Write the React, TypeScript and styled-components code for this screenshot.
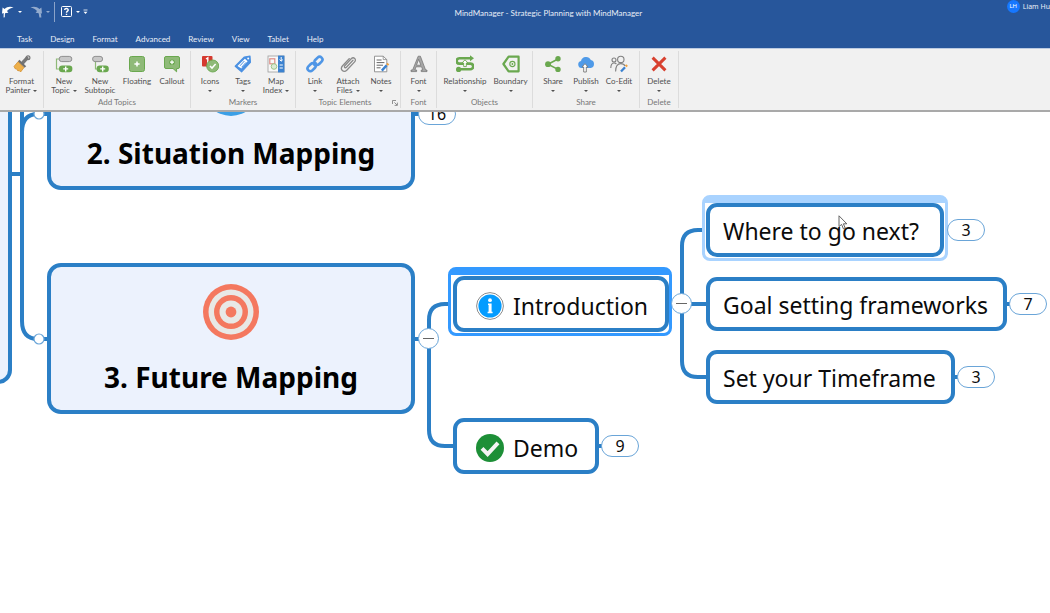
import React from "react";
import styled, { createGlobalStyle } from "styled-components";

const line = "#2b7fc6";
const green = "#6aa84f";
const softGreen = "#8fba78";

const GlobalStyle = createGlobalStyle`
  * { box-sizing: border-box; }
  body { margin: 0; background: #fff; }
  button { font: inherit; color: inherit; background: none; border: 0; padding: 0; margin: 0; cursor: default; }
`;

const Page = styled.div`
  min-height: 100vh;
  display: flex;
  flex-direction: column;
  overflow: hidden;
  font-family: Lato, "Liberation Sans", sans-serif;
  font-size: 8px;
  line-height: 9px;
`;

/* ---------- Title bar ---------- */

const Header = styled.header`
  background: #27569b;
  color: #e9eef7;
`;

const TitleBar = styled.div`
  display: flex;
  align-items: flex-start;
  height: 28px;
`;

const QuickAccess = styled.div`
  flex: none;
  display: flex;
  align-items: center;
  width: 90px;
  height: 23px;
  padding-left: 2px;
`;

const QuickButton = styled.button<{ $width: number; $dim?: boolean }>`
  display: flex;
  align-items: center;
  gap: 4px;
  width: ${(p) => p.$width}px;
  color: #fff;
  opacity: ${(p) => (p.$dim ? 0.5 : 1)};
`;

const QuickDivider = styled.span`
  width: 1px;
  height: 20px;
  margin-right: 6px;
  background: #8ba3c9;
`;

const DocumentTitle = styled.h1`
  flex: 1;
  margin: 0;
  padding-top: 8px;
  text-align: center;
  font-size: 8px;
  line-height: 10px;
  font-weight: 400;
`;

const UserButton = styled.button`
  flex: none;
  display: flex;
  align-items: center;
  gap: 3px;
  height: 13px;
  font-family: "Noto Sans", "Open Sans", sans-serif;
  font-size: 7px;
  white-space: nowrap;
`;

const Avatar = styled.span`
  flex: none;
  width: 13px;
  height: 13px;
  border-radius: 50%;
  background: #1677ff;
  color: #fff;
  font-size: 6px;
  line-height: 13px;
  text-align: center;
`;

const Tabs = styled.nav`
  display: flex;
  gap: 18px;
  height: 20px;
  padding: 6px 17px 0;
`;

const Tab = styled.button`
  height: 10px;
`;

/* ---------- Ribbon ---------- */

const Ribbon = styled.div`
  display: flex;
  height: 64px;
  background: #f1f1f1;
  border-top: 1px solid #bccbe2;
  border-bottom: 2px solid #a9a9a9;
  color: #505050;
`;

const Group = styled.section`
  display: flex;
  flex-direction: column;
  justify-content: space-between;
  margin: 2px 0;
  padding: 4px 2px 0;
  border-right: 1px solid #dcdcdc;
`;

const Tools = styled.div`
  display: flex;
`;

const Tool = styled.button<{ $width: number }>`
  display: flex;
  flex-direction: column;
  align-items: center;
  justify-content: flex-start;
  width: ${(p) => p.$width}px;
  white-space: nowrap;
`;

const ToolIcon = styled.svg`
  width: 18px;
  height: 18px;
  margin-bottom: 4px;
`;

const ToolLine = styled.span`
  display: flex;
  align-items: center;
  justify-content: center;
  gap: 3px;
  height: 9px;
`;

const Caret = styled.i`
  border: 2px solid transparent;
  border-top-color: currentColor;
  border-bottom: 0;
`;

const GroupFooter = styled.div`
  display: flex;
  align-items: center;
  height: 11px;
  color: #777;
`;

const GroupName = styled.span`
  flex: 1;
  text-align: center;
  white-space: nowrap;
`;

/* ---------- Map canvas ---------- */

const Canvas = styled.main`
  position: relative;
  flex: 1;
  overflow: hidden;
  background: #fff;
  font-family: "Noto Sans", "Open Sans", sans-serif;
  color: #0b0b0b;
`;

const Connectors = styled.svg`
  position: absolute;
  left: 0;
  top: 0;
  width: 1050px;
  height: 500px;
`;

interface Box {
  $x: number;
  $y: number;
  $w: number;
  $h: number;
}

const Placed = styled.div<Box>`
  position: absolute;
  left: ${(p) => p.$x}px;
  top: ${(p) => p.$y}px;
  width: ${(p) => p.$w}px;
  height: ${(p) => p.$h}px;
`;

const MainTopic = styled(Placed)`
  display: flex;
  flex-direction: column;
  align-items: center;
  gap: 19px;
  padding-top: 17px;
  border: 4px solid ${line};
  border-radius: 14px;
  background: #ecf2fd;
  font-size: 28px;
  line-height: 36px;
  font-weight: 700;
  color: #000;
  white-space: nowrap;
`;

const Topic = styled(Placed)<{ $marked?: boolean }>`
  display: flex;
  align-items: center;
  gap: 9px;
  padding: ${(p) => (p.$marked ? "4px 0 0 19px" : "2px 0 0 13px")};
  border: 4px solid ${line};
  border-radius: 11px;
  background: #fff;
  font-size: 23px;
  line-height: 32px;
  white-space: nowrap;
`;

const Highlight = styled(Placed)<{ $color: string }>`
  border: 3px solid ${(p) => p.$color};
  border-top-width: 8px;
  border-radius: 8px;
  background: #fff;
`;

const Count = styled.button<{ $x: number; $y: number }>`
  position: absolute;
  left: ${(p) => p.$x}px;
  top: ${(p) => p.$y}px;
  width: 38px;
  height: 22px;
  border: 1px solid #6aa5d8;
  border-radius: 11px;
  background: #fff;
  font-size: 16px;
  line-height: 20px;
  text-align: center;
`;

const Toggle = styled.button<{ $x: number; $y: number }>`
  position: absolute;
  left: ${(p) => p.$x}px;
  top: ${(p) => p.$y}px;
  display: grid;
  place-items: center;
  width: 21px;
  height: 21px;
  border: 1px solid #6aa5d8;
  border-radius: 50%;
  background: #fff;

  &::before {
    content: "";
    width: 11px;
    height: 1px;
    background: #666;
  }
`;

const Pointer = styled.svg`
  position: absolute;
  left: 838px;
  top: 103px;
  width: 10px;
  height: 15px;
`;

/* ---------- Ribbon icons ---------- */

const icons: Record<string, React.ReactNode> = {
  painter: (
    <>
      <path d="M10 7.5 14 3.2" stroke="#777" strokeWidth="3.4" strokeLinecap="round" />
      <circle cx="15" cy="2.7" r="1.9" fill="none" stroke="#777" strokeWidth="1.2" />
      <path d="M5.6 5.6 12.4 12" stroke="#6f6f6f" strokeWidth="2.4" />
      <path d="M5 6.8 11 12.6 7.6 17 6 15.4 5 16 3.4 13.8 2.2 13.8 1 11.4Z" fill="#eeb04a" stroke="#d08a2a" strokeWidth=".7" />
    </>
  ),
  newTopic: (
    <>
      <path d="M5 4H1.5V14H5" fill="none" stroke={softGreen} strokeWidth="1.2" />
      <rect x="4.2" y="1.4" width="12.6" height="5.2" rx="2.5" fill="#c8c8c8" stroke="#8e8e8e" />
      <rect x="4" y="10.6" width="13.4" height="6.6" rx="3.2" fill={green} />
      <path d="M8.2 13.9H13.2M10.7 11.4V16.4" stroke="#fff" strokeWidth="1.4" />
    </>
  ),
  subtopic: (
    <>
      <path d="M4.5 6V14H8" fill="none" stroke={softGreen} strokeWidth="1.2" />
      <rect x="1.6" y="1.4" width="10" height="5.2" rx="2.5" fill="#c8c8c8" stroke="#8e8e8e" />
      <rect x="5.6" y="10.6" width="12.2" height="6.6" rx="3.2" fill={green} />
      <path d="M9.2 13.9H14.2M11.7 11.4V16.4" stroke="#fff" strokeWidth="1.4" />
    </>
  ),
  floating: (
    <>
      <rect x="1.5" y="1.5" width="15" height="15" rx="2" fill={softGreen} stroke={green} />
      <path d="M6.4 9H11.6M9 6.4V11.6" stroke="#fff" strokeWidth="1.5" />
    </>
  ),
  callout: (
    <>
      <path d="M3 1.5H15A1.5 1.5 0 0 1 16.5 3V12A1.5 1.5 0 0 1 15 13.5H13.6V16.8L10 13.5H3A1.5 1.5 0 0 1 1.5 12V3A1.5 1.5 0 0 1 3 1.5Z" fill={softGreen} stroke={green} />
      <circle cx="9" cy="7.2" r="2.8" fill={green} />
      <path d="M7 7.2H11M9 5.2V9.2" stroke="#fff" strokeWidth="1.3" />
    </>
  ),
  icons: (
    <>
      <rect x="1" y="1" width="10.5" height="10.5" rx="1" fill="#d5392f" />
      <path d="M5 4 6.8 2.8V9" fill="none" stroke="#fff" strokeWidth="1.4" />
      <circle cx="11.7" cy="11" r="6" fill={softGreen} stroke={green} strokeWidth=".9" />
      <path d="M9 11 11 13.1 14.6 9" fill="none" stroke="#fff" strokeWidth="1.5" />
    </>
  ),
  tags: (
    <>
      <path d="M10.4 2 16 1.2 16.4 7.4 7.6 16.8 1.2 11.2Z" fill="#4a90e2" stroke="#4a90e2" strokeWidth="1.2" strokeLinejoin="round" />
      <path d="M10.9 3.7 13.6 6.2 7.3 13.6 3.5 10.9Z" fill="#fff" />
      <path d="M10.4 6 6 10.8M12 7.4 7.7 12.2" stroke="#4a90e2" strokeWidth="1" />
      <circle cx="14.2" cy="3.4" r="1" fill="#fff" />
    </>
  ),
  mapIndex: (
    <>
      <rect x="1" y="1" width="16" height="16" fill="#f8f8f8" stroke="#9c9c9c" strokeWidth=".8" />
      <rect x="11" y=".6" width="6.4" height="16.8" fill="#3b82d0" />
      <rect x="2.8" y="3.8" width="5" height="5" fill="none" stroke="#dc8d86" strokeWidth="1.2" />
      <circle cx="7" cy="11.5" r="2.8" fill="#dcebd4" stroke="#9cc489" strokeWidth="1" />
      <path d="M14.2 2V6M12.6 4.6 14.2 6.2 15.8 4.6M12.6 10H15.8M12.6 13H15.8" fill="none" stroke="#fff" strokeWidth="1" />
    </>
  ),
  link: (
    <g fill="none" stroke="#4f96e6" strokeWidth="2.6">
      <rect x="7.9" y="3" width="9" height="5.6" rx="2.8" transform="rotate(-45 12.4 5.8)" />
      <rect x="1.1" y="9.4" width="9" height="5.6" rx="2.8" transform="rotate(-45 5.6 12.2)" />
      <path d="M7.4 10.6 10.6 7.4" strokeWidth="2.2" />
    </g>
  ),
  attach: (
    <path d="M14 5.2 7.4 12.2C6.2 13.4 4.7 12 5.8 10.8L12.2 3.8C14.6 1.3 18 4.3 15.6 6.9L8 15C4.6 18.4.4 14.4 3.6 10.8L10.2 3.6" fill="none" stroke="#8a8a8a" strokeWidth="1.3" strokeLinecap="round" />
  ),
  notes: (
    <>
      <path d="M2.5 1.2H11.2L14.8 4.6V16.8H2.5Z" fill="#fff" stroke="#8a8a8a" strokeWidth=".9" />
      <path d="M11.2 1.2V4.6H14.8" fill="none" stroke="#8a8a8a" strokeWidth=".8" />
      <path d="M4.6 5H9.6M4.6 7.6H12.4M4.6 10.2H11M4.6 12.8H8.6" stroke="#555" strokeWidth=".9" />
      <path d="M9.8 15.6 14.6 10.4" stroke="#3b82d0" strokeWidth="2.4" />
      <path d="M15 10 16.4 8.6" stroke="#eea040" strokeWidth="2.4" />
    </>
  ),
  font: (
    <path d="M8.2 1.2H10.4L15.6 15H17V16.6H11.2V15H12.8L11.6 11.8H6L4.9 15H6.6V16.6H1V15H2.6ZM8.6 4.4 6.5 10.2H10.9Z" fill="#a6a6a6" stroke="#6f6f6f" strokeWidth=".7" fillRule="evenodd" />
  ),
  relationship: (
    <>
      <path d="M14.5 3.2H3.4A2.7 2.7 0 0 0 3.4 8.6H14.4A2.8 2.8 0 0 1 14.4 14.2H3" fill="none" stroke={green} strokeWidth="2.6" />
      <path d="M14 .2 18 3.2 14 6.2Z" fill={green} />
      <circle cx="2.6" cy="14.4" r="2.6" fill={green} />
      <path d="M9 4.8 12 8H10.3V11.6H7.7V8H6Z" fill="#fff" stroke={green} strokeWidth=".9" />
    </>
  ),
  boundary: (
    <>
      <path d="M16.6 1.7V16.3H6.6L1.4 9 6.6 1.7Z" fill="none" stroke={green} strokeWidth="2.2" strokeLinejoin="round" />
      <circle cx="10.4" cy="9" r="2.6" fill="none" stroke={green} strokeWidth="1.1" />
      <circle cx="10.4" cy="9" r=".9" fill={green} />
    </>
  ),
  share: (
    <>
      <path d="M14 4 4 9.2 14 14.4" fill="none" stroke={green} strokeWidth="1.6" />
      <circle cx="14" cy="3.8" r="2.7" fill={green} />
      <circle cx="4" cy="9.2" r="2.9" fill={green} />
      <circle cx="14" cy="14.4" r="2.7" fill={green} />
    </>
  ),
  publish: (
    <>
      <path d="M4.6 13A3.6 3.6 0 0 1 4 5.9 5.2 5.2 0 0 1 13.8 5 4.1 4.1 0 0 1 13.8 13Z" fill="#4f9ae8" />
      <path d="M8 8.6 11 12H9.3V17H6.7V12H5Z" fill="#fff" stroke="#777" strokeWidth=".9" />
    </>
  ),
  coEdit: (
    <>
      <g fill="none" stroke="#808080" strokeWidth="1.1">
        <circle cx="10.8" cy="4.4" r="3.2" />
        <circle cx="4" cy="5" r="2" />
        <path d="M5.6 16.6C5.6 11 7.4 8.6 10.8 8.6 13 8.6 14.4 9.6 15 11M.8 13C.8 9.8 2 8 4 8 5 8 5.8 8.4 6.4 9" />
      </g>
      <path d="M11 16.6 15 12.2" stroke="#3b82d0" strokeWidth="2.3" />
      <path d="M15.8 11.4 17 10" stroke="#eea040" strokeWidth="2.3" />
    </>
  ),
  delete: <path d="M2.6 2.6 15.4 15.4M15.4 2.6 2.6 15.4" stroke="#d8402f" strokeWidth="3" />,
};

interface ToolSpec {
  icon: string;
  label: string;
  second?: string;
  menu?: boolean;
  width: number;
}

interface GroupSpec {
  name: string;
  launcher?: boolean;
  tools: ToolSpec[];
}

const groups: GroupSpec[] = [
  { name: "", tools: [{ icon: "painter", label: "Format", second: "Painter", menu: true, width: 39 }] },
  {
    name: "Add Topics",
    tools: [
      { icon: "newTopic", label: "New", second: "Topic", menu: true, width: 36 },
      { icon: "subtopic", label: "New", second: "Subtopic", width: 36 },
      { icon: "floating", label: "Floating", width: 38 },
      { icon: "callout", label: "Callout", width: 32 },
    ],
  },
  {
    name: "Markers",
    tools: [
      { icon: "icons", label: "Icons", menu: true, width: 34 },
      { icon: "tags", label: "Tags", menu: true, width: 32 },
      { icon: "mapIndex", label: "Map", second: "Index", menu: true, width: 34 },
    ],
  },
  {
    name: "Topic Elements",
    launcher: true,
    tools: [
      { icon: "link", label: "Link", menu: true, width: 34 },
      { icon: "attach", label: "Attach", second: "Files", menu: true, width: 32 },
      { icon: "notes", label: "Notes", menu: true, width: 34 },
    ],
  },
  { name: "Font", tools: [{ icon: "font", label: "Font", menu: true, width: 31 }] },
  {
    name: "Objects",
    tools: [
      { icon: "relationship", label: "Relationship", menu: true, width: 52 },
      { icon: "boundary", label: "Boundary", menu: true, width: 39 },
    ],
  },
  {
    name: "Share",
    tools: [
      { icon: "share", label: "Share", menu: true, width: 36 },
      { icon: "publish", label: "Publish", menu: true, width: 30 },
      { icon: "coEdit", label: "Co-Edit", menu: true, width: 36 },
    ],
  },
  { name: "Delete", tools: [{ icon: "delete", label: "Delete", menu: true, width: 34 }] },
];

const tabs = ["Task", "Design", "Format", "Advanced", "Review", "View", "Tablet", "Help"];

const ToolButton = ({ tool }: { tool: ToolSpec }) => (
  <Tool $width={tool.width}>
    <ToolIcon viewBox="0 0 18 18" fill="none">{icons[tool.icon]}</ToolIcon>
    <ToolLine>{tool.label}</ToolLine>
    {(tool.second || tool.menu) && (
      <ToolLine>
        {tool.second}
        {tool.menu && <Caret />}
      </ToolLine>
    )}
  </Tool>
);

const Target = () => (
  <svg width="56" height="56" viewBox="0 0 56 56">
    <circle cx="28" cy="28" r="28" fill="#f4785f" />
    <circle cx="28" cy="28" r="22.5" fill="#e8e8e6" />
    <circle cx="28" cy="28" r="17" fill="#f4785f" />
    <circle cx="28" cy="28" r="11.5" fill="#e8e8e6" />
    <circle cx="28" cy="28" r="5.4" fill="#f4785f" />
  </svg>
);

const InfoMark = () => (
  <svg width="28" height="28" viewBox="0 0 28 28">
    <circle cx="14" cy="14" r="13.4" fill="#fff" stroke="#8d8d8d" />
    <circle cx="14" cy="14" r="11.6" fill="#049cff" />
    <circle cx="14" cy="8.2" r="1.9" fill="#fff" />
    <path d="M12 11.6H15.6V19.8H16.6V21.2H11.6V19.8H12.6V13H12Z" fill="#fff" />
  </svg>
);

const DoneMark = () => (
  <svg width="28" height="28" viewBox="0 0 28 28">
    <circle cx="14" cy="14" r="14" fill="#1d8f37" />
    <path d="M6 14.4 11.6 20 22 8.8" fill="none" stroke="#f4f4f4" strokeWidth="4" />
  </svg>
);

export default function App() {
  return (
    <Page>
      <GlobalStyle />
      <Header>
        <TitleBar>
          <QuickAccess>
            <QuickButton $width={28} aria-label="Undo">
              <svg width="12" height="12" viewBox="0 0 12 12">
                <path d="M0 7.4.6 1.6 2.6 3C5 .4 8.6.2 11.6 1.4 8.6 2 6.6 3.2 5 5L6.4 6.8Z" fill="#fff" />
                <path d="M3.4 5C2.2 7 2 9 2.2 11.4" fill="none" stroke="#fff" strokeWidth="1.2" />
              </svg>
              <Caret />
            </QuickButton>
            <QuickButton $width={24} $dim aria-label="Redo">
              <svg width="12" height="12" viewBox="0 0 12 12">
                <path d="M12 7.4 11.4 1.6 9.4 3C7 .4 3.4.2.4 1.4 3.4 2 5.4 3.2 7 5L5.6 6.8Z" fill="#fff" />
                <path d="M8.6 5C9.8 7 10.4 9 10.4 11.4" fill="none" stroke="#fff" strokeWidth="2" />
              </svg>
              <Caret />
            </QuickButton>
            <QuickDivider />
            <QuickButton $width={22} aria-label="Help topics">
              <svg width="11" height="11" viewBox="0 0 11 11" fill="none">
                <rect x=".5" y=".5" width="10" height="10" rx="1" stroke="#fff" />
                <path d="M3.6 4C3.8 2 7.4 2 7.2 4.1 7.1 5.2 5.5 5.2 5.5 6.8M5.5 7.7V9" stroke="#fff" strokeWidth="1.4" />
              </svg>
              <Caret />
            </QuickButton>
            <QuickButton $width={6} aria-label="Customize quick access">
              <svg width="5" height="6" viewBox="0 0 5 6">
                <path d="M.5 1H4.5" stroke="#fff" strokeWidth=".8" />
                <path d="M.5 2.8H4.5L2.5 5Z" fill="#fff" />
              </svg>
            </QuickButton>
          </QuickAccess>
          <DocumentTitle>MindManager - Strategic Planning with MindManager</DocumentTitle>
          <UserButton>
            <Avatar>LH</Avatar>
            Liam Hu
          </UserButton>
        </TitleBar>
        <Tabs>
          {tabs.map((t) => (
            <Tab key={t}>{t}</Tab>
          ))}
        </Tabs>
      </Header>

      <Ribbon>
        {groups.map((g, i) => (
          <Group key={i}>
            <Tools>
              {g.tools.map((t) => (
                <ToolButton key={t.icon} tool={t} />
              ))}
            </Tools>
            <GroupFooter>
              <GroupName>{g.name}</GroupName>
              {g.launcher && (
                <svg width="6" height="6" viewBox="0 0 6 6" fill="none" stroke="#777" strokeWidth=".8">
                  <path d="M.5 4V.5H4M2.4 2.4 5 5M5.4 2.6V5.4H2.6" />
                </svg>
              )}
            </GroupFooter>
          </Group>
        ))}
      </Ribbon>

      <Canvas>
        <Connectors viewBox="0 0 1050 500" fill="none" stroke={line} strokeWidth="4">
          <path d="M10 62H22M22 0V209Q22 227 38 227H49M22 20Q22 2 38 2H49" />
          <path d="M413 2H421M413 227H420M429 227V208Q429 192 445 192H455M429 227V318Q429 334 445 334H455" />
          <path d="M597 334H604M666 192H708M682 192V134Q682 118 698 118H708M682 192V249Q682 265 698 265H708" />
          <path d="M942 118H950M1004 192H1012M953 265H960" />
          <g fill="#fff" stroke="#6aa5d8" strokeWidth="1.2">
            <circle cx="39" cy="2" r="5" />
            <circle cx="39" cy="227" r="5" />
          </g>
        </Connectors>

        <MainTopic $x={-100} $y={-120} $w={112} $h={392} />
        <MainTopic $x={47} $y={-73} $w={368} $h={151}>
          <svg width="56" height="56" viewBox="0 0 56 56">
            <circle cx="28" cy="28" r="28" fill="#3b9fe6" />
          </svg>
          2. Situation Mapping
        </MainTopic>
        <MainTopic $x={47} $y={151} $w={368} $h={151}>
          <Target />
          3. Future Mapping
        </MainTopic>

        <Highlight $x={448} $y={155} $w={224} $h={69} $color="#3399ff" />
        <Topic $x={453} $y={164} $w={216} $h={56} $marked>
          <InfoMark />
          Introduction
        </Topic>
        <Topic $x={453} $y={306} $w={146} $h={56} $marked>
          <DoneMark />
          Demo
        </Topic>

        <Highlight $x={702} $y={83} $w={246} $h={66} $color="#a9d3ff" />
        <Topic $x={706} $y={91} $w={238} $h={54}>Where to go next?</Topic>
        <Topic $x={706} $y={165} $w={301} $h={54}>Goal setting frameworks</Topic>
        <Topic $x={706} $y={238} $w={249} $h={54}>Set your Timeframe</Topic>

        <Count $x={418} $y={-9}>16</Count>
        <Count $x={601} $y={323}>9</Count>
        <Count $x={947} $y={107}>3</Count>
        <Count $x={1009} $y={181}>7</Count>
        <Count $x={957} $y={254}>3</Count>
        <Toggle $x={418} $y={216} aria-label="Collapse Future Mapping" />
        <Toggle $x={671} $y={181} aria-label="Collapse Introduction" />

        <Pointer viewBox="0 0 10 15">
          <path d="M1 .8V11.6L3.6 9.4 5.4 13.8 7.2 13 5.4 8.8H8.8Z" fill="#fff" stroke="#555" strokeWidth=".9" />
        </Pointer>
      </Canvas>
    </Page>
  );
}
